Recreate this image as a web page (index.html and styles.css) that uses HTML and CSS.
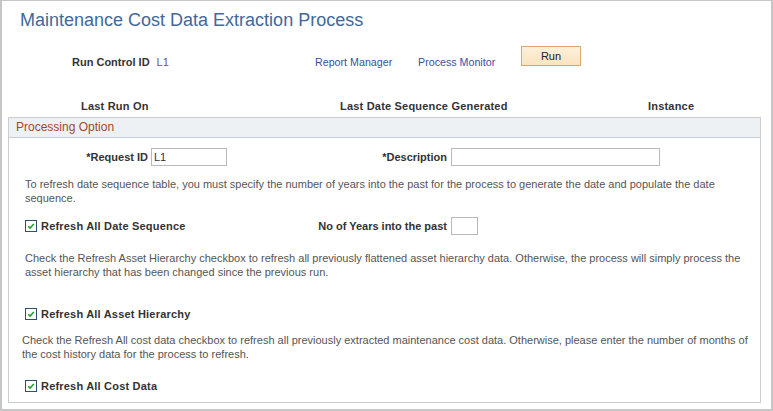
FILE: index.html
```html
<!DOCTYPE html>
<html>
<head>
<meta charset="utf-8">
<link rel="stylesheet" href="styles.css">
</head>
<body>
<div class="page">
  <h1 class="title">Maintenance Cost Data Extraction Process</h1>
  <div class="run-row">
    <div class="rc-cell"><span class="lbl">Run Control ID</span><span class="rc-val">L1</span></div>
    <a class="link link-rm" href="#">Report Manager</a>
    <a class="link link-pm" href="#">Process Monitor</a>
    <button class="run-btn" type="button">Run</button>
  </div>
  <div class="last-row">
    <span class="lbl wide last-1">Last Run On</span>
    <span class="lbl wide last-2">Last Date Sequence Generated</span>
    <span class="lbl wide last-3">Instance</span>
  </div>
  <div class="panel">
    <div class="panel-head">Processing Option</div>
    <div class="panel-body">
      <div class="field-row req-row">
        <label class="lbl col-a">*Request ID</label>
        <div class="input in-req">L1</div>
        <label class="lbl col-b">*Description</label>
        <div class="input in-desc"></div>
      </div>
      <p class="note note-1">To refresh date sequence table, you must specify the number of years into the past for the process to generate the date and populate the date sequence.</p>
      <div class="field-row cb-row-1">
        <div class="cb-group">
          <svg class="cb" width="12" height="12" viewBox="0 0 12 12"><rect x="0.5" y="0.5" width="11" height="11" fill="#fff" stroke="#2f4e70"/><path d="M3.2 6.2 L5 8 L8.8 4" fill="none" stroke="#2a9c2a" stroke-width="1.6"/></svg>
          <span class="lbl wide">Refresh All Date Sequence</span>
        </div>
        <label class="lbl col-b">No of Years into the past</label>
        <div class="input in-years"></div>
      </div>
      <p class="note note-2">Check the Refresh Asset Hierarchy checkbox to refresh all previously flattened asset hierarchy data. Otherwise, the process will simply process the asset hierarchy that has been changed since the previous run.</p>
      <div class="cb-row cb-row-2">
        <svg class="cb" width="12" height="12" viewBox="0 0 12 12"><rect x="0.5" y="0.5" width="11" height="11" fill="#fff" stroke="#2f4e70"/><path d="M3.2 6.2 L5 8 L8.8 4" fill="none" stroke="#2a9c2a" stroke-width="1.6"/></svg>
        <span class="lbl wide">Refresh All Asset Hierarchy</span>
      </div>
      <p class="note note-3">Check the Refresh All cost data checkbox to refresh all previously extracted maintenance cost data. Otherwise, please enter the number of months of the cost history data for the process to refresh.</p>
      <div class="cb-row cb-row-3">
        <svg class="cb" width="12" height="12" viewBox="0 0 12 12"><rect x="0.5" y="0.5" width="11" height="11" fill="#fff" stroke="#2f4e70"/><path d="M3.2 6.2 L5 8 L8.8 4" fill="none" stroke="#2a9c2a" stroke-width="1.6"/></svg>
        <span class="lbl wide">Refresh All Cost Data</span>
      </div>
    </div>
  </div>
</div>
</body>
</html>
```
FILE: styles.css
```css
* { box-sizing: border-box; }
html, body { margin: 0; padding: 0; background: #fff; }
body { font-family: Arial, "Liberation Sans", sans-serif; font-size: 11px; color: #333; }

.page {
  width: 773px;
  height: 411px;
  border-style: solid;
  border-color: #c6c6c6;
  border-width: 1px 2px 2px 2px;
  overflow: hidden;
}

.title {
  margin: 0;
  padding: 8px 0 0 18px;
  font-size: 18px;
  font-weight: normal;
  line-height: 22px;
  color: #42689a;
}

.lbl { font-weight: bold; color: #333; font-size: 11px; line-height: 14px; white-space: nowrap; }
.wide { letter-spacing: 0.2px; }

.run-row {
  display: flex;
  align-items: flex-start;
  margin-top: 15px;
  margin-left: 70px;
  height: 20px;
}
.rc-cell { width: 243px; padding-top: 9px; display: flex; }
.rc-val { margin-left: 7px; color: #6a4fa3; line-height: 14px; }
.link {
  padding-top: 9px;
  font-size: 10.7px;
  line-height: 14px;
  color: #3a4f9f;
  text-decoration: none;
  width: 103px;
}
.run-btn {
  width: 60px;
  height: 20px;
  margin: 0;
  padding: 0;
  border: 1px solid #d8a86c;
  background: linear-gradient(#fdf0da, #fbe3bd);
  font-family: Arial, "Liberation Sans", sans-serif;
  font-size: 11px;
  color: #222;
  line-height: 18px;
}

.last-row {
  display: flex;
  margin-top: 33px;
  margin-left: 79px;
  height: 14px;
}
.last-1 { width: 259px; }
.last-2 { width: 308px; }

.panel {
  margin-top: 4px;
  margin-left: 6px;
  width: 753px;
}
.panel-head {
  height: 21px;
  border: 1px solid #c9cdd1;
  background: #eef1f3;
  padding-left: 7px;
  font-size: 12px;
  line-height: 19px;
  color: #a04a2c;
}
.panel-body {
  border: 1px solid #c9cdd1;
  border-top: none;
  padding: 10px 0 9px 0;
  height: 265px;
}

.field-row { display: flex; align-items: center; height: 18px; }
.col-a { width: 139px; text-align: right; margin-right: 3px; }
.col-b { width: 220px; text-align: right; margin-right: 4px; }
.input {
  height: 18px;
  border: 1px solid #b9b9b9;
  background: #fff;
  font-size: 11px;
  line-height: 16px;
  padding-left: 2px;
  color: #333;
}
.in-req { width: 76px; }
.in-desc { width: 209px; }
.in-years { width: 27px; }

.note {
  margin: 0;
  font-size: 11px;
  line-height: 14px;
  color: #555;
}
.note-1 { margin-top: 11px; padding-left: 16px; width: 748px; }
.note-2 { margin-top: 16px; padding-left: 16px; width: 748px; }
.note-3 { margin-top: 12px; padding-left: 13px; width: 748px; }

.cb-group { width: 202px; margin-left: 16px; display: flex; align-items: center; }
.cb { display: block; flex: none; margin-right: 4px; }
.cb-row-1 { margin-top: 12px; }
.cb-row { display: flex; align-items: center; }
.cb-row-2, .cb-row-3 { margin-left: 16px; height: 14px; }
.cb-row-2 { margin-top: 28px; }
.cb-row-3 { margin-top: 18px; }
```
